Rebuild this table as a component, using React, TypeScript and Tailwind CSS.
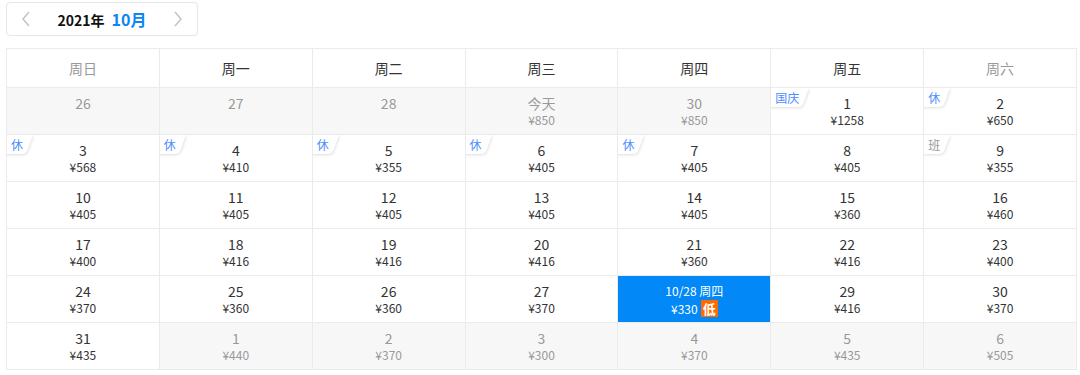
import React from "react";

type Day = {
  label: string;
  price?: string;
  muted?: boolean;
  tag?: string;
  work?: boolean;
  selected?: boolean;
};

const weekNames = ["周日", "周一", "周二", "周三", "周四", "周五", "周六"];

const rows: Day[][] = [
  [
    { label: "26", muted: true },
    { label: "27", muted: true },
    { label: "28", muted: true },
    { label: "今天", price: "850", muted: true },
    { label: "30", price: "850", muted: true },
    { label: "1", price: "1258", tag: "国庆" },
    { label: "2", price: "650", tag: "休" },
  ],
  [
    { label: "3", price: "568", tag: "休" },
    { label: "4", price: "410", tag: "休" },
    { label: "5", price: "355", tag: "休" },
    { label: "6", price: "405", tag: "休" },
    { label: "7", price: "405", tag: "休" },
    { label: "8", price: "405" },
    { label: "9", price: "355", tag: "班", work: true },
  ],
  [
    { label: "10", price: "405" },
    { label: "11", price: "405" },
    { label: "12", price: "405" },
    { label: "13", price: "405" },
    { label: "14", price: "405" },
    { label: "15", price: "360" },
    { label: "16", price: "460" },
  ],
  [
    { label: "17", price: "400" },
    { label: "18", price: "416" },
    { label: "19", price: "416" },
    { label: "20", price: "416" },
    { label: "21", price: "360" },
    { label: "22", price: "416" },
    { label: "23", price: "400" },
  ],
  [
    { label: "24", price: "370" },
    { label: "25", price: "360" },
    { label: "26", price: "360" },
    { label: "27", price: "370" },
    { label: "10/28 周四", price: "330", selected: true },
    { label: "29", price: "416" },
    { label: "30", price: "370" },
  ],
  [
    { label: "31", price: "435" },
    { label: "1", price: "440", muted: true },
    { label: "2", price: "370", muted: true },
    { label: "3", price: "300", muted: true },
    { label: "4", price: "370", muted: true },
    { label: "5", price: "435", muted: true },
    { label: "6", price: "505", muted: true },
  ],
];

// 左上角的节假日标签
const Tag: React.FC<{ text: string; work?: boolean }> = ({ text, work }) => (
  <span className="absolute left-0 top-0 h-[19px] flex items-start">
    <span className="absolute inset-0 -skew-x-[20deg] origin-top rounded-br-[4px] bg-white shadow-[1px_1px_3px_rgba(0,0,0,0.13)]" />
    <span className={`relative pl-[4px] pr-[10px] pt-[1px] text-[12px] leading-[17px] ${work ? "text-[#999]" : "text-[#4b8dff]"}`}>
      {text}
    </span>
  </span>
);

const Cell: React.FC<{ day: Day }> = ({ day }) => {
  if (day.selected) {
    return (
      <div className="relative h-[47px] border-r border-b border-[#ebebeb] bg-[#0288f7] flex flex-col items-center pt-[7px] text-white">
        <div className="text-[12px] leading-[16px]">{day.label}</div>
        <div className="mt-[1px] flex items-center text-[12px] leading-[17px]">
          <span>¥{day.price}</span>
          <span className="ml-[3px] bg-[#ff6a00] px-[2px] text-[13px] leading-[17px] font-bold">低</span>
        </div>
      </div>
    );
  }
  return (
    <div
      className={`relative h-[47px] border-r border-b border-[#ebebeb] overflow-hidden flex flex-col items-center pt-[6px] ${
        day.muted ? "bg-[#f7f7f7] text-[#999]" : "bg-white text-[#333]"
      }`}
    >
      {day.tag && <Tag text={day.tag} work={day.work} />}
      <div className="text-[14px] leading-[18px]">{day.label}</div>
      {day.price && <div className="text-[12px] leading-[16px]">¥{day.price}</div>}
    </div>
  );
};

const App: React.FC = () => {
  return (
    <div className="w-[1080px] h-[375px] bg-white" style={{ fontFamily: '"Noto Sans CJK SC", "Noto Sans", sans-serif' }}>
      {/* 年月切换 */}
      <div className="ml-[6px] pt-[2px]">
        <div className="w-[192px] h-[34px] border border-[#e6e6e6] rounded-[4px] flex items-center justify-between px-[14px]">
          <svg width="10" height="16" viewBox="0 0 10 16">
            <polyline points="8,1 2,8 8,15" fill="none" stroke="#c4c4c4" strokeWidth="1.5" />
          </svg>
          <div className="flex items-baseline gap-[7px] font-bold">
            <span className="text-[14px] text-[#111]">2021年</span>
            <span className="text-[16px] text-[#0a86f5]">10月</span>
          </div>
          <svg width="10" height="16" viewBox="0 0 10 16">
            <polyline points="2,1 8,8 2,15" fill="none" stroke="#c4c4c4" strokeWidth="1.5" />
          </svg>
        </div>
      </div>

      {/* 日历 */}
      <div className="ml-[6px] mt-[12px] w-[1071px] border-l border-t border-[#ebebeb]">
        <div className="grid grid-cols-7">
          {weekNames.map((w, i) => (
            <div
              key={w}
              className={`h-[39px] border-r border-b border-[#ebebeb] flex items-center justify-center text-[14px] ${
                i === 0 || i === 6 ? "text-[#999]" : "text-[#333]"
              }`}
            >
              {w}
            </div>
          ))}
        </div>
        {rows.map((r, ri) => (
          <div key={ri} className="grid grid-cols-7">
            {r.map((d, di) => (
              <Cell key={di} day={d} />
            ))}
          </div>
        ))}
      </div>
    </div>
  );
};

export default App;
